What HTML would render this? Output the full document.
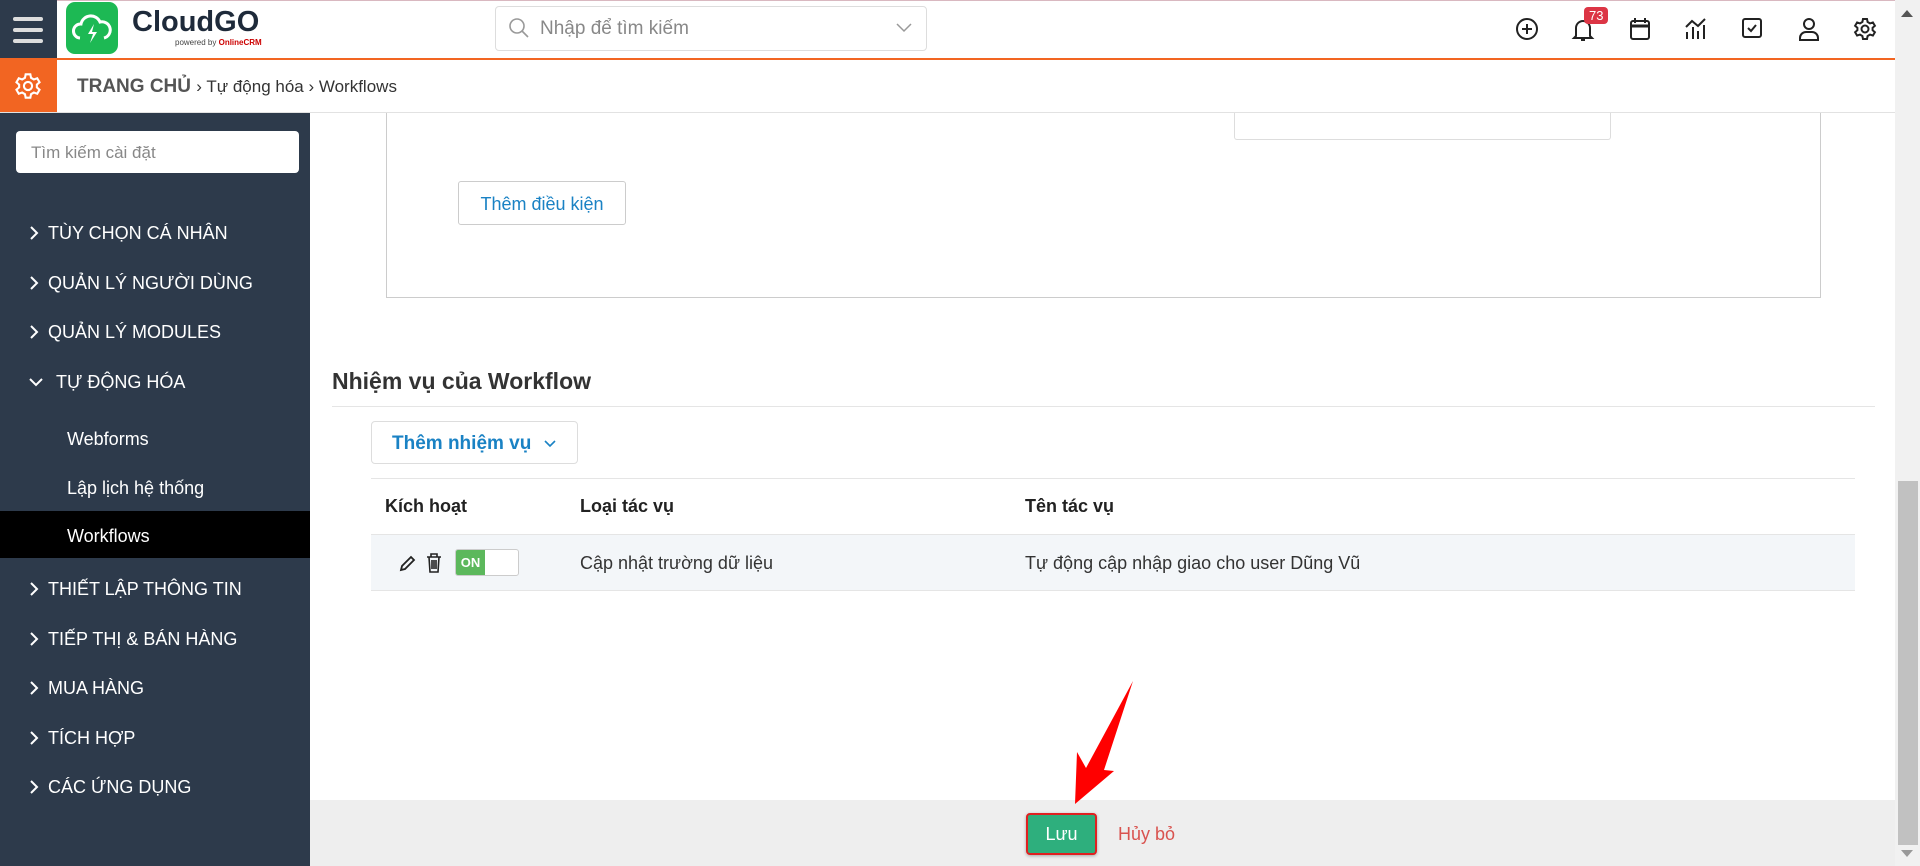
<!DOCTYPE html>
<html><head><meta charset="utf-8"><style>
*{box-sizing:border-box;margin:0;padding:0}
body{width:1920px;height:866px;overflow:hidden;background:#fff;font-family:"Liberation Sans","Noto Sans CJK SC",sans-serif;position:relative;color:#222}
.a{position:absolute}
.top{left:0;top:0;width:1895px;height:59px;border-top:1px solid #d9b8c0;background:#fff}
.sb{left:0;top:113px;width:310px;height:753px;background:#2d3a4b}
.mi{position:absolute;left:28px;color:#fff;font-size:18px;white-space:nowrap}
.mi svg{vertical-align:-2px;margin-right:8px}
.sub{position:absolute;left:67px;color:#fff;font-size:18px}
.ic{position:absolute;top:17px}
</style></head><body>
<div class="a top"></div>
<div class="a" style="left:0;top:0;width:57px;height:59px;background:#2d3a4b"></div>
<div class="a" style="left:13px;top:17px;width:30px;height:4px;background:#ddd;border-radius:2px"></div>
<div class="a" style="left:13px;top:28px;width:30px;height:4px;background:#ddd;border-radius:2px"></div>
<div class="a" style="left:13px;top:39px;width:30px;height:4px;background:#ddd;border-radius:2px"></div>
<div class="a" style="left:66px;top:2px;width:52px;height:52px;background:#1db954;border-radius:9px"></div>
<svg class="a" style="left:72px;top:12px" width="40" height="34" viewBox="0 0 40 34"><path d="M8 26a7 7 0 0 1 1-14 10 10 0 0 1 19-2 8 8 0 0 1 4 16" fill="none" stroke="#fff" stroke-width="3"/><path d="M22 12l-6 10h5l-3 9 7-11h-5z" fill="#fff"/></svg>
<div class="a" style="left:132px;top:6px;font-size:29px;font-weight:bold;color:#1e2a3a">CloudGO</div>
<div class="a" style="left:175px;top:38px;font-size:8px;color:#444">powered by <b style="color:#c00">OnlineCRM</b></div>
<div class="a" style="left:495px;top:6px;width:432px;height:45px;border:1px solid #ddd;border-radius:4px"></div>
<svg class="a" style="left:508px;top:17px" width="22" height="22" viewBox="0 0 22 22"><circle cx="9" cy="9" r="7" fill="none" stroke="#999" stroke-width="1.6"/><path d="M14 14l6 6" stroke="#999" stroke-width="1.6"/></svg>
<div class="a" style="left:540px;top:18px;font-size:19px;color:#888">Nhập để tìm kiếm</div>
<svg class="a" style="left:895px;top:22px" width="18" height="12" viewBox="0 0 18 12"><path d="M2 2l7 7 7-7" fill="none" stroke="#999" stroke-width="1.5"/></svg>
<svg class="ic" style="left:1515px" width="24" height="24" viewBox="0 0 24 24" fill="none" stroke="#222" stroke-width="2"><circle cx="12" cy="12" r="10"/><path d="M12 7v10M7 12h10"/></svg>
<svg class="ic" style="left:1571px" width="24" height="26" viewBox="0 0 24 26" fill="none" stroke="#222" stroke-width="2"><path d="M5 19V11a7 7 0 0 1 14 0v8l2 2H3z"/><path d="M10 23h4"/></svg>
<div class="a" style="left:1584px;top:7px;background:#dc3545;color:#fff;font-size:13px;padding:1px 5px;border-radius:4px">73</div>
<svg class="ic" style="left:1629px" width="22" height="24" viewBox="0 0 22 24" fill="none" stroke="#222" stroke-width="2"><rect x="2" y="4" width="18" height="18" rx="2"/><path d="M2 9h18" stroke-width="3"/><path d="M6 1v5M16 1v5"/></svg>
<svg class="ic" style="left:1684px" width="26" height="24" viewBox="0 0 26 24" fill="none" stroke="#222" stroke-width="2"><path d="M2 10l6-6 6 5 7-7"/><path d="M3 15v7M9 10v12M14 14v8M20 8v14"/></svg>
<svg class="ic" style="left:1741px" width="22" height="22" viewBox="0 0 22 22" fill="none" stroke="#222" stroke-width="2"><rect x="2" y="2" width="18" height="18" rx="2"/><path d="M7 11l3 3 5-6"/></svg>
<svg class="ic" style="left:1797px" width="24" height="24" viewBox="0 0 24 24" fill="none" stroke="#222" stroke-width="2"><circle cx="12" cy="7" r="5"/><path d="M3 23v-2a6 6 0 0 1 6-6h6a6 6 0 0 1 6 6v2z"/></svg>
<svg class="ic" style="left:1853px" width="24" height="24" viewBox="0 0 24 24" fill="none" stroke="#222" stroke-width="2"><circle cx="12" cy="12" r="3.5"/><path d="M10 2h4l.6 3 2.4 1.4 2.9-1 2 3.4-2.3 2v2.4l2.3 2-2 3.4-2.9-1-2.4 1.4-.6 3h-4l-.6-3-2.4-1.4-2.9 1-2-3.4 2.3-2v-2.4l-2.3-2 2-3.4 2.9 1L9.4 5z"/></svg>
<div class="a" style="left:1895px;top:0;width:25px;height:866px;background:#f1f1f1"></div>
<div class="a" style="left:1898px;top:481px;width:20px;height:364px;background:#c1c1c1"></div>
<div class="a" style="left:1901px;top:10px;border:6px solid transparent;border-bottom:7px solid #555;border-top:0"></div>
<div class="a" style="left:1901px;top:850px;border:6px solid transparent;border-top:7px solid #999;border-bottom:0"></div>
<div class="a" style="left:0;top:58px;width:1895px;height:2px;background:#f26522"></div>
<div class="a" style="left:0;top:60px;width:57px;height:53px;background:#f26522"></div>
<svg class="a" style="left:14px;top:72px" width="28" height="28" viewBox="0 0 24 24" fill="none" stroke="#fff" stroke-width="1.8"><circle cx="12" cy="12" r="3.5"/><path d="M10 2h4l.6 3 2.4 1.4 2.9-1 2 3.4-2.3 2v2.4l2.3 2-2 3.4-2.9-1-2.4 1.4-.6 3h-4l-.6-3-2.4-1.4-2.9 1-2-3.4 2.3-2v-2.4l-2.3-2 2-3.4 2.9 1L9.4 5z"/></svg>
<div class="a" style="left:77px;top:76px;font-size:19px;color:#555;white-space:nowrap"><span style="font-weight:600">TRANG CHỦ</span> <span style="font-size:17px;color:#333">› Tự động hóa › Workflows</span></div>
<div class="a" style="left:0;top:112px;width:1895px;height:1px;background:#e2e2e2"></div>
<div class="a sb"></div>
<div class="a" style="left:16px;top:131px;width:283px;height:42px;background:#fff;border-radius:4px;padding:12px 15px;font-size:17px;color:#888">Tìm kiếm cài đặt</div>
<div class="mi" style="top:223px"><svg width="12" height="16" viewBox="0 0 12 16"><path d="M3 2l6 6-6 6" fill="none" stroke="#fff" stroke-width="2"/></svg>TÙY CHỌN CÁ NHÂN</div>
<div class="mi" style="top:273px"><svg width="12" height="16" viewBox="0 0 12 16"><path d="M3 2l6 6-6 6" fill="none" stroke="#fff" stroke-width="2"/></svg>QUẢN LÝ NGƯỜI DÙNG</div>
<div class="mi" style="top:322px"><svg width="12" height="16" viewBox="0 0 12 16"><path d="M3 2l6 6-6 6" fill="none" stroke="#fff" stroke-width="2"/></svg>QUẢN LÝ MODULES</div>
<div class="mi" style="top:372px"><svg width="16" height="16" viewBox="0 0 16 16" style="margin-right:12px"><path d="M2 5l6 6 6-6" fill="none" stroke="#fff" stroke-width="2"/></svg>TỰ ĐỘNG HÓA</div>
<div class="sub" style="top:429px">Webforms</div>
<div class="sub" style="top:478px">Lập lịch hệ thống</div>
<div class="a" style="left:0;top:511px;width:310px;height:47px;background:#000"></div>
<div class="sub" style="top:526px">Workflows</div>
<div class="mi" style="top:579px"><svg width="12" height="16" viewBox="0 0 12 16"><path d="M3 2l6 6-6 6" fill="none" stroke="#fff" stroke-width="2"/></svg>THIẾT LẬP THÔNG TIN</div>
<div class="mi" style="top:629px"><svg width="12" height="16" viewBox="0 0 12 16"><path d="M3 2l6 6-6 6" fill="none" stroke="#fff" stroke-width="2"/></svg>TIẾP THỊ &amp; BÁN HÀNG</div>
<div class="mi" style="top:678px"><svg width="12" height="16" viewBox="0 0 12 16"><path d="M3 2l6 6-6 6" fill="none" stroke="#fff" stroke-width="2"/></svg>MUA HÀNG</div>
<div class="mi" style="top:728px"><svg width="12" height="16" viewBox="0 0 12 16"><path d="M3 2l6 6-6 6" fill="none" stroke="#fff" stroke-width="2"/></svg>TÍCH HỢP</div>
<div class="mi" style="top:777px"><svg width="12" height="16" viewBox="0 0 12 16"><path d="M3 2l6 6-6 6" fill="none" stroke="#fff" stroke-width="2"/></svg>CÁC ỨNG DỤNG</div>
<div class="a" style="left:386px;top:113px;width:1435px;height:185px;border:1px solid #ccc;border-top:0"></div>
<div class="a" style="left:1234px;top:113px;width:377px;height:27px;border:1px solid #ddd;border-top:0;border-radius:0 0 3px 3px"></div>
<div class="a" style="left:458px;top:181px;width:168px;height:44px;border:1px solid #ccc;border-radius:3px;color:#1a82c4;font-size:18px;text-align:center;line-height:44px">Thêm điều kiện</div>
<div class="a" style="left:332px;top:368px;font-size:23px;color:#333;font-weight:600">Nhiệm vụ của Workflow</div>
<div class="a" style="left:332px;top:406px;width:1543px;height:1px;background:#e5e5e5"></div>
<div class="a" style="left:371px;top:421px;width:207px;height:43px;border:1px solid #ddd;border-radius:4px;color:#1a82c4;font-size:19px;font-weight:600;padding:11px 0 0 20px">Thêm nhiệm vụ <svg width="14" height="10" viewBox="0 0 14 10" style="margin-left:6px"><path d="M2 2l5 5 5-5" fill="none" stroke="#1a82c4" stroke-width="1.6"/></svg></div>
<div class="a" style="left:371px;top:478px;width:1484px;height:1px;background:#e5e5e5"></div>
<div class="a" style="left:385px;top:496px;font-size:18px;color:#222;font-weight:600">Kích hoạt</div>
<div class="a" style="left:580px;top:496px;font-size:18px;color:#222;font-weight:600">Loại tác vụ</div>
<div class="a" style="left:1025px;top:496px;font-size:18px;color:#222;font-weight:600">Tên tác vụ</div>
<div class="a" style="left:371px;top:534px;width:1484px;height:57px;background:#f3f6f9;border-top:1px solid #e5e5e5;border-bottom:1px solid #e5e5e5"></div>
<svg class="a" style="left:398px;top:553px" width="18" height="20" viewBox="0 0 18 20" fill="none" stroke="#222" stroke-width="1.8"><path d="M3 17l1-4L13 4l3 3-9 9z"/></svg>
<svg class="a" style="left:425px;top:552px" width="18" height="22" viewBox="0 0 18 22" fill="none" stroke="#222" stroke-width="1.6"><path d="M2 5h14M6 5V2h6v3M4 5l1 15h8l1-15M7 8v9M9 8v9M11 8v9"/></svg>
<div class="a" style="left:455px;top:549px;width:64px;height:27px;border:1px solid #ccc;border-radius:3px;background:#fff;overflow:hidden"><div style="width:29px;height:25px;background:#5cb85c;color:#fff;font-size:13px;font-weight:bold;text-align:center;line-height:25px">ON</div></div>
<div class="a" style="left:580px;top:553px;font-size:18px;color:#333">Cập nhật trường dữ liệu</div>
<div class="a" style="left:1025px;top:553px;font-size:18px;color:#333">Tự động cập nhập giao cho user Dũng Vũ</div>
<div class="a" style="left:310px;top:800px;width:1585px;height:66px;background:#eee"></div>
<div class="a" style="left:1026px;top:813px;width:71px;height:42px;background:#2eaf7d;border:2px solid #e02020;border-radius:4px;color:#fff;font-size:18px;text-align:center;line-height:38px;box-shadow:0 1px 3px rgba(0,0,0,.3)">Lưu</div>
<div class="a" style="left:1118px;top:824px;font-size:18px;color:#d9534f">Hủy bỏ</div>
<svg class="a" style="left:0;top:0" width="1920" height="866"><path d="M1133 681L1104 770 1114 771 1075 804 1077 752 1086 768z" fill="#f00"/></svg>
</body></html>
